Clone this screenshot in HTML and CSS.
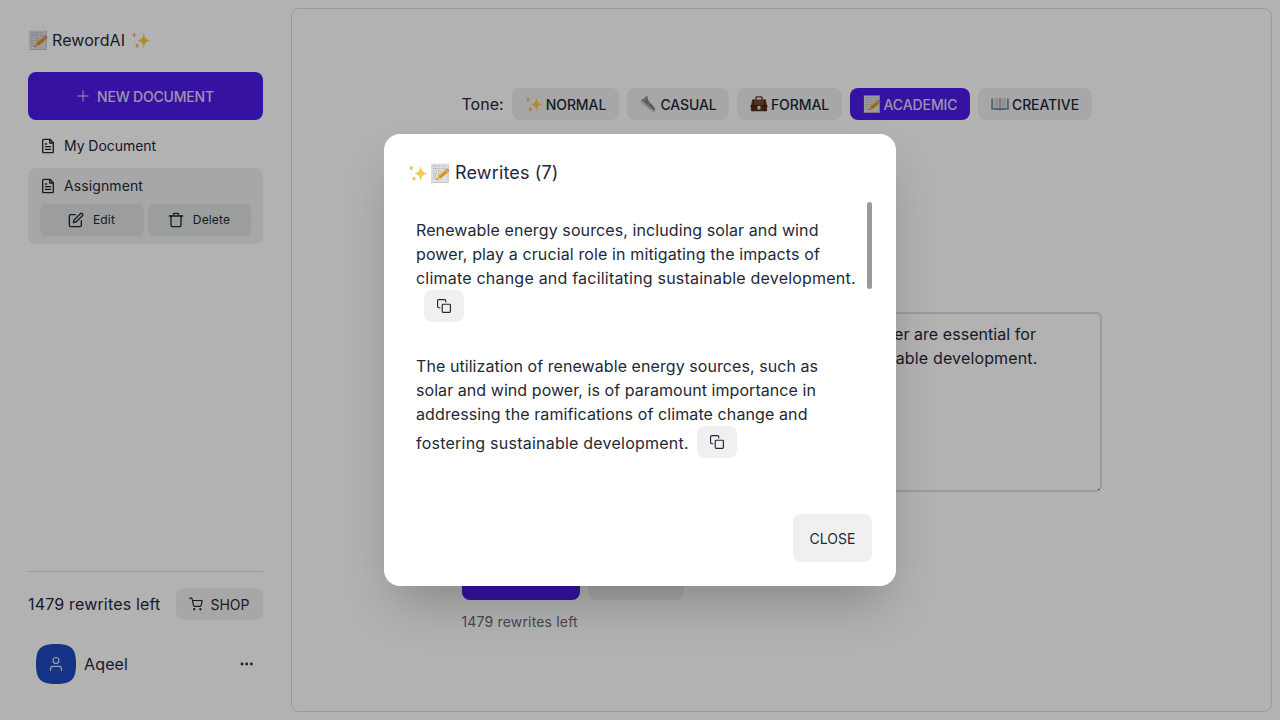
FILE: index.html
```html
<!DOCTYPE html>
<html lang="en">
<head>
<meta charset="utf-8">
<title>RewordAI</title>
<link rel="stylesheet" href="styles.css">
</head>
<body>
<svg class="defs" width="0" height="0" aria-hidden="true">
  <symbol id="memo" viewBox="0 0 20 20">
    <rect x="1" y=".5" width="17.500" height="19" fill="#dedfe1"/>
    <path d="M1 19.500h17.500M18.200.5v19" stroke="#babbbe" stroke-width=".8"/>
    <path d="M3 3h3m1 0h4m1 0h4M3 5.500h5m1 0h2m1 0h3M3 8h2m1 0h5M3 10.500h4m1 0h2M3 13h3M3 15.500h3" stroke="#a0a2a5" stroke-width=".8" stroke-dasharray="1.300 .5"/>
    <path d="M6.500 17l1.600-4.500L15.200 6.500l3 3-7.100 6z" fill="#f0ac31"/>
    <path d="M9 15l8-6.800" stroke="#c98220" stroke-width="1.200"/>
    <path d="M6.500 17l1.400-3.800 2.400 2.500z" fill="#e2c298"/><path d="M6.500 17l.5-1.400.9.9z" fill="#333"/>
    <path d="M14.500 7.200l1-1 2.900 2.900-1 1z" fill="#a6b5bd"/>
    <path d="M15.500 6.200l.5-.4q1.600-.9 2.700.3 1.200 1.200.3 2.600l-.6.500z" fill="#e77d80"/>
  </symbol>
  <symbol id="sparkles" viewBox="0 0 20 20">
    <path d="M12.700 2.500q.5 7.500 6.800 8-6.300.500-6.800 8-.5-7.500-6.500-8 6-.5 6.500-8z" fill="#fcc847"/>
    <path d="M3.300 1.500q.2 3.300 2.800 3.500-2.600.2-2.800 3.500Q3.100 5.200.5 5 3.100 4.800 3.300 1.500zM6 12.500q.2 3 2.600 3.200Q6.200 16 6 19q-.2-3-2.600-3.300Q5.800 15.500 6 12.500z" fill="#f0b265"/>
  </symbol>
  <symbol id="shoe" viewBox="0 0 20 20">
    <path d="M2 5.500l3-1.200L7.800 1l2 .8.4 4 6 7.200q2.800 2.400 1.800 5.200l-2.500.8L9 13.800 2.200 8.500z" fill="#9b9c9d"/>
    <path d="M2 6.500l.2 2 12.300 10.200 3.200.2.300-1.500-3.500-.6L6 8.700z" fill="#d3d2d0"/>
    <path d="M5.500 5l4 4M8 3.500l2 3-3 1.500m5 0-3.500 2.500m5.500-.5L11 12.500" stroke="#626467" stroke-width=".9" fill="none"/>
    <path d="M12.500 10.500l4.500 5" stroke="#707274" stroke-width="1.400"/>
  </symbol>
  <symbol id="briefcase" viewBox="0 0 20 20">
    <path d="M6.500 6V3.200q0-1.200 1.200-1.200h4.600q1.200 0 1.200 1.200V6" fill="none" stroke="#5a3525" stroke-width="1.500"/>
    <path d="M2.500 5h15l1.700 7.500H.8z" fill="#7a442d"/><rect x="1" y="11.500" width="18" height="6.500" rx="1" fill="#5a301f"/>
    <path d="M.6 12.100h18.800M3.800 5v13m12.400-13v13" stroke="#3c2219" stroke-width="1.200"/>
    <rect x="8.300" y="12.300" width="3.400" height="3.800" rx=".5" fill="#e2e2dc"/>
  </symbol>
  <symbol id="book" viewBox="0 0 20 20">
    <path d="M.4 4h19.200v12.500h-8.200l-1.400.9-1.400-.9H.4z" fill="#4f8299"/>
    <path d="M2 3Q7.500 1.300 10 3.300q2.500-2 8-.3V15q-5.500-1.300-8 .5Q7.500 13.700 2 15z" fill="#e2e2e1"/>
    <path d="M4.500 4v9.500M6.300 4v9.500M8 4.500v9.500M12 4.500v9.500M13.700 4v9.500M15.500 4v9.500" stroke="#b7babc" stroke-width=".7"/>
    <path d="M10 3.500v12" stroke="#7a7f82" stroke-width="1"/>
  </symbol>
  <symbol id="doc" viewBox="0 0 24 24"><path d="M15 2H5.500A1.500 1.500 0 0 0 4 3.500v17A1.500 1.500 0 0 0 5.500 22h13a1.500 1.500 0 0 0 1.500-1.500V7zM14.500 2v5.500H20M8 9h2M8 13h8M8 17h8"/></symbol>
  <symbol id="copy" viewBox="0 0 24 24"><rect x="9" y="9" width="14" height="14" rx="1.500"/><path d="M5 15H3a2 2 0 0 1-2-2V3a2 2 0 0 1 2-2h10a2 2 0 0 1 2 2v2"/></symbol>
</svg>

<div class="app">
  <aside class="sidebar">
    <div class="brand"><svg class="emoji"><use href="#memo"/></svg><span class="brand-name">RewordAI</span><svg class="emoji"><use href="#sparkles"/></svg></div>
    <button class="btn primary new-doc"><svg class="icon plus" viewBox="0 0 12 12"><path d="M6 .8v10.400M.8 6h10.400"/></svg><span class="new-label">NEW DOCUMENT</span></button>
    <nav class="docs">
      <div class="doc"><div class="doc-title"><svg class="icon doc-icon"><use href="#doc"/></svg><span class="t-mydoc">My Document</span></div></div>
      <div class="doc active">
        <div class="doc-title"><svg class="icon doc-icon"><use href="#doc"/></svg><span class="t-assign">Assignment</span></div>
        <div class="doc-actions">
          <button class="mini edit"><svg class="icon" viewBox="0 0 24 24"><path d="M11 4H4a2 2 0 0 0-2 2v14a2 2 0 0 0 2 2h14a2 2 0 0 0 2-2v-7"/><path d="M18.500 2.500a2.120 2.120 0 0 1 3 3L12 15l-4 1 1-4z"/></svg><span>Edit</span></button>
          <button class="mini delete"><svg class="icon" viewBox="0 0 24 24"><path d="M2 6h20M4.500 6v14a2 2 0 0 0 2 2h11a2 2 0 0 0 2-2V6M8 6V4a2 2 0 0 1 2-2h4a2 2 0 0 1 2 2v2"/></svg><span>Delete</span></button>
        </div>
      </div>
    </nav>
    <div class="account">
      <div class="quota"><span class="t-quota">1479 rewrites left</span>
        <button class="btn small shop"><svg class="icon" viewBox="0 0 24 24"><path d="M1 2h4l2.700 12.500a2 2 0 0 0 2 1.500h9.200a2 2 0 0 0 2-1.600L22.500 6H6"/><circle cx="9" cy="21" r="1"/><circle cx="19.500" cy="21" r="1"/></svg><span>SHOP</span></button>
      </div>
      <div class="user">
        <span class="avatar"><svg viewBox="0 0 40 40"><path class="squircle" d="M20 0C35.500 0 40 4.500 40 20S35.500 40 20 40 0 35.500 0 20 4.500 0 20 0z"/><circle cx="20" cy="16.400" r="2.900"/><path d="M14.500 26.500v-1.600q0-2.500 2.500-2.500h6q2.500 0 2.500 2.500v1.600"/></svg></span>
        <span class="t-user">Aqeel</span>
        <svg class="dots" viewBox="0 0 14 4"><circle cx="2" cy="2" r="1.400"/><circle cx="6.700" cy="2" r="1.400"/><circle cx="11.400" cy="2" r="1.400"/></svg>
      </div>
    </div>
  </aside>

  <main class="panel">
    <div class="editor">
      <div class="tones">
        <span class="tone-label">Tone:</span>
        <button class="btn small tone normal"><svg class="emoji"><use href="#sparkles"/></svg><span>NORMAL</span></button>
        <button class="btn small tone casual"><svg class="emoji"><use href="#shoe"/></svg><span>CASUAL</span></button>
        <button class="btn small tone formal"><svg class="emoji"><use href="#briefcase"/></svg><span>FORMAL</span></button>
        <button class="btn small tone academic primary"><svg class="emoji"><use href="#memo"/></svg><span>ACADEMIC</span></button>
        <button class="btn small tone creative"><svg class="emoji"><use href="#book"/></svg><span>CREATIVE</span></button>
      </div>
      <div class="input">
        <div class="input-text"><div>er are essential for</div><div>able development.</div></div>
        <i class="grip"></i>
      </div>
      <div class="actions"><button class="btn primary rewrite"></button><button class="btn clear"></button></div>
      <div class="hint"><span>1479 rewrites left</span></div>
    </div>
  </main>
</div>

<div class="overlay">
  <section class="modal">
    <h3 class="modal-title"><svg class="emoji"><use href="#sparkles"/></svg><svg class="emoji"><use href="#memo"/></svg><span>Rewrites (7)</span></h3>
    <div class="scroll">
      <div class="results">
        <div class="result">
          <div><span class="l1">Renewable energy sources, including solar and wind</span></div>
          <div><span class="l2">power, play a crucial role in mitigating the impacts of</span></div>
          <div><span class="l3">climate change and facilitating sustainable development.</span></div>
          <div class="last"><button class="btn small copy"><svg class="icon"><use href="#copy"/></svg></button></div>
        </div>
        <div class="result">
          <div><span class="l4">The utilization of renewable energy sources, such as</span></div>
          <div><span class="l5">solar and wind power, is of paramount importance in</span></div>
          <div><span class="l6">addressing the ramifications of climate change and</span></div>
          <div class="last"><span class="l7">fostering sustainable development.</span><button class="btn small copy"><svg class="icon"><use href="#copy"/></svg></button></div>
        </div>
      </div>
      <i class="thumb"></i>
    </div>
    <div class="modal-footer"><button class="btn close"><span>CLOSE</span></button></div>
  </section>
</div>
</body>
</html>
```
FILE: styles.css
```css
* { box-sizing: border-box; }
body { margin: 0; width: 1280px; height: 720px; overflow: hidden; background: #fff; color: #1f2937; font: 16px/24px Inter, "Liberation Sans", sans-serif; }
button { font: inherit; color: inherit; border: 0; margin: 0; padding: 0; }
span { white-space: nowrap; }
.defs { position: absolute; }
.icon { fill: none; stroke: currentColor; stroke-width: 2; stroke-linecap: round; stroke-linejoin: round; width: 16px; height: 16px; flex: none; }
.emoji { width: 20px; height: 20px; flex: none; }
.app { display: flex; height: 720px; padding: 8px 8px 8px 0; }
.sidebar { width: 291px; padding: 20px 28px; display: flex; flex-direction: column; }
.brand { display: flex; align-items: center; height: 24px; gap: 4px; margin-bottom: 20px; }
.brand-name { width: 75px; letter-spacing: .08px; }
.btn { display: flex; align-items: center; justify-content: center; height: 48px; border-radius: 8px; background: #f0f0f0; font-size: 14px; line-height: 14px; font-weight: 500; flex: none; }
.btn span { padding-top: 1px; }
.btn.small { height: 32px; }
.btn.primary { background: #4d1ae9; color: #e0d5f5; }
.new-doc { gap: 8px; }
.new-label { letter-spacing: -.2px; }
.plus { width: 12px; height: 12px; stroke-width: 1; }
.docs { display: flex; flex-direction: column; gap: 4px; padding-top: 8px; }
.doc { border-radius: 8px; padding: 0 12px; height: 36px; font-size: 14px; }
.doc.active { height: 76px; background: #f0f0f0; }
.doc-title { display: flex; align-items: center; gap: 8px; height: 36px; }
.doc-icon { stroke-width: 2; }
.t-mydoc { letter-spacing: -.05px; }
.t-assign { letter-spacing: .1px; }
.doc-actions { display: flex; gap: 4px; }
.mini { height: 32px; border-radius: 6px; background: #dfe3e1; display: flex; align-items: center; justify-content: center; gap: 9px; font-size: 12px; letter-spacing: .15px; }
.edit { width: 104px; }
.edit .icon { margin-left: -1px; }
.delete { width: 103px; }
.delete .icon { margin-left: -1px; }
.account { margin-top: auto; height: 121px; border-top: 1px solid #dedede; padding-top: 16px; }
.quota { display: flex; align-items: center; justify-content: space-between; height: 32px; }
.t-quota { letter-spacing: .17px; }
.shop { width: 87px; gap: 7px; font-weight: 400; }
.shop .icon { width: 14px; height: 14px; }
.user { display: flex; align-items: center; padding: 24px 8px 0; height: 64px; }
.avatar, .avatar svg { display: block; width: 40px; height: 40px; }
.avatar svg { fill: none; stroke: #d8e0f7; stroke-width: 1.200; stroke-linecap: round; }
.avatar .squircle { fill: #1d4ac2; stroke: none; }
.t-user { margin-left: 8px; letter-spacing: .15px; }
.dots { width: 14px; height: 4px; margin: 0 1px 0 auto; fill: #1f2937; }
.panel { flex: 1; border: 1px solid #dedede; border-radius: 8px; padding: 79px 169.500px 0; }
.tones { display: flex; align-items: center; gap: 8px; height: 32px; }
.tone-label { width: 42.500px; }
.tone { gap: 3px; letter-spacing: -.1px; }
.tone .emoji { width: 18px; height: 18px; }
.normal { width: 107px; }
.casual { width: 102px; }
.formal { width: 105px; }
.academic { width: 120px; }
.creative { width: 114px; }
.input { width: 640px; height: 180px; margin-top: 192px; border: 2px solid #dedede; border-radius: 6px; padding: 8px 16px; display: flex; justify-content: space-between; }
.input-text { width: 558px; white-space: nowrap; display: flex; flex-direction: column; align-items: flex-end; }
.input-text div:first-child { margin-right: 1.500px; letter-spacing: .05px; }
.input-text div:last-child { letter-spacing: .15px; }
.grip { width: 1px; height: 1px; background: #222; align-self: flex-end; margin: 0 -15px -8px 0; }
.actions { display: flex; gap: 8px; margin-top: 60px; }
.rewrite { width: 118px; }
.clear { width: 96px; }
.hint { font-size: 14px; line-height: 20px; margin-top: 12px; color: #636973; letter-spacing: .17px; }
.overlay { position: absolute; inset: 0; display: flex; align-items: center; justify-content: center; background: rgba(0,0,0,.3); }
.modal { width: 512px; height: 452px; padding: 24px; background: #fff; border-radius: 16px; box-shadow: 0 25px 50px -12px rgba(0,0,0,.25); display: flex; flex-direction: column; }
.modal-title { display: flex; align-items: center; height: 30px; margin: 0 0 14px; font-size: 18px; font-weight: 400; gap: 2px; }
.modal-title span { margin-left: 3px; letter-spacing: .15px; }
.scroll { display: flex; justify-content: space-between; height: 288px; overflow: hidden; }
.results { padding: 0 8px; }
.result { height: 136px; padding-top: 16px; }
.last { display: flex; height: 32px; }
.l1 { letter-spacing: .1px; }
.l2 { letter-spacing: .12px; }
.l3 { letter-spacing: .21px; }
.l4 { letter-spacing: .07px; }
.l5 { letter-spacing: .06px; }
.l6 { letter-spacing: .1px; }
.l7 { padding-top: 5px; letter-spacing: .23px; }
.copy { width: 40px; margin-left: 8px; }
.copy .icon { width: 14px; height: 14px; }
.thumb { width: 5px; height: 87px; border-radius: 3px; background: #999; }
.modal-footer { display: flex; justify-content: flex-end; margin-top: auto; }
.close { width: 79px; font-weight: 400; }
```
